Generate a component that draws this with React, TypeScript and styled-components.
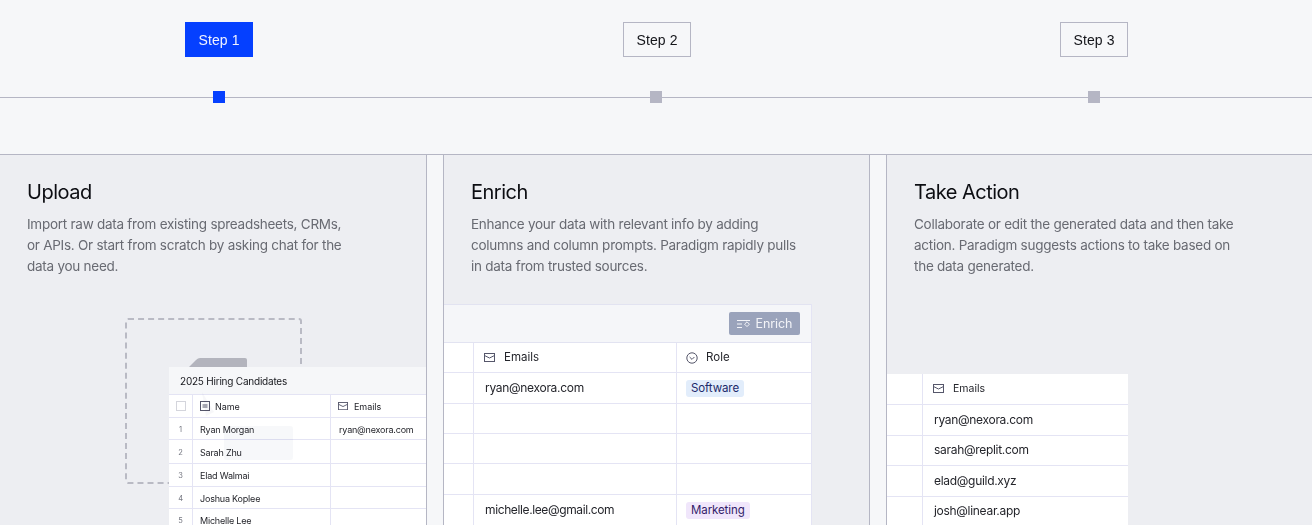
import React from "react";
import styled, { createGlobalStyle } from "styled-components";

const Global = createGlobalStyle`
  html, body { margin: 0; padding: 0; background: #f6f7f9; }
  body { width: 1312px; height: 525px; overflow: hidden; font-family: Inter, "Liberation Sans", sans-serif; }
`;

const Page = styled.div`
  width: 1312px;
  height: 525px;
  overflow: hidden;
  background: #f6f7f9;
`;

const Timeline = styled.div`
  position: relative;
  display: grid;
  grid-template-columns: 438px 438px 436px;
  height: 155px;
  box-sizing: border-box;
  border-bottom: 1px solid #b5b6c4;
  &::before {
    content: "";
    position: absolute;
    left: 0;
    right: 0;
    top: 97px;
    height: 1px;
    background: #b5b6c4;
  }
`;

const StepCol = styled.div`
  display: flex;
  flex-direction: column;
  align-items: center;
  padding-top: 22px;
  gap: 34px;
  position: relative;
`;

const StepBadge = styled.div<{ $active?: boolean }>`
  width: 68px;
  height: 35px;
  box-sizing: border-box;
  display: flex;
  align-items: center;
  justify-content: center;
  font: 14px/1 "Liberation Sans", Arial, sans-serif;
  letter-spacing: 0.1px;
  background: ${(p) => (p.$active ? "#0540ff" : "transparent")};
  border: 1px solid ${(p) => (p.$active ? "#0540ff" : "#b5b6c4")};
  color: ${(p) => (p.$active ? "#f0f2ff" : "#14151a")};
`;

const Dot = styled.div<{ $active?: boolean; $nudge?: boolean }>`
  width: 12px;
  height: 12px;
  margin-right: ${(p) => (p.$nudge ? "2px" : "0")};
  background: ${(p) => (p.$active ? "#0540ff" : "#b5b6c4")};
`;

const Panels = styled.div`
  display: grid;
  grid-template-columns: 427px 427px 426px;
  column-gap: 16px;
  height: 370px;
`;

const Panel = styled.section<{ $first?: boolean; $last?: boolean }>`
  position: relative;
  overflow: hidden;
  box-sizing: border-box;
  background: #edeef2;
  padding-top: 24px;
  padding-left: 27px;
  border-left: ${(p) => (p.$first ? "none" : "1px solid #b5b6c4")};
  border-right: ${(p) => (p.$last ? "none" : "1px solid #b5b6c4")};
`;

const Title = styled.h2`
  margin: 0;
  font: 400 20px/26px Inter, sans-serif;
  letter-spacing: -0.5px;
  color: #0c0d12;
`;

const Desc = styled.p`
  margin: 9px 0 0;
  font: 400 13.5px/21px Inter, sans-serif;
  letter-spacing: -0.26px;
  color: #686a72;
  white-space: pre-line;
`;

const Illustration = styled.div`
  position: absolute;
  left: 0;
  top: 0;
  width: 100%;
  height: 100%;
`;

const DropZone = styled.div`
  position: absolute;
  left: 125px;
  top: 163px;
  width: 177px;
  height: 166px;
  box-sizing: border-box;
  border: 2px dashed #b9bac4;
  border-radius: 3px;
`;

const FolderTab = styled.svg`
  position: absolute;
  left: 188px;
  top: 203px;
`;

const Table = styled.div<{ $left: number; $top: number; $w: number }>`
  position: absolute;
  left: ${(p) => p.$left}px;
  top: ${(p) => p.$top}px;
  width: ${(p) => p.$w}px;
  background: #fff;
  box-sizing: border-box;
`;

const NameBar = styled.div`
  height: 28px;
  box-sizing: border-box;
  background: #f6f7f9;
  border-bottom: 1px solid #e4e4f4;
  padding-left: 11px;
  font: 400 10px/28px Inter, sans-serif;
  letter-spacing: -0.22px;
  color: #16171c;
`;

const ToolBar = styled.div`
  height: 39px;
  box-sizing: border-box;
  background: #f5f6f9;
  border: 1px solid #e2e3f1;
  border-left: none;
  display: flex;
  justify-content: flex-end;
  align-items: center;
  padding-right: 11px;
`;

const EnrichButton = styled.div`
  width: 71px;
  height: 23px;
  background: #9aa3bb;
  border-radius: 2px;
  display: flex;
  align-items: center;
  justify-content: center;
  gap: 5px;
  color: #f3f4f8;
  font: 400 12.5px/1 Inter, sans-serif;
  letter-spacing: -0.1px;
  padding-top: 1px;
  box-sizing: border-box;
`;

const Row = styled.div<{ $cols: string; $h: number; $fs: number; $ls?: number; $drop?: number }>`
  display: grid;
  grid-template-columns: ${(p) => p.$cols};
  height: ${(p) => p.$h}px;
  box-sizing: border-box;
  border-bottom: 1px solid #e4e4f4;
  font: 400 ${(p) => p.$fs}px/1 Inter, sans-serif;
  letter-spacing: ${(p) => p.$ls ?? 0}px;
  color: #24252b;
  & > div {
    padding-top: ${(p) => p.$drop ?? 0}px;
  }
`;

const Cell = styled.div<{ $pad?: number; $gap?: number; $center?: boolean }>`
  display: flex;
  align-items: center;
  justify-content: ${(p) => (p.$center ? "center" : "flex-start")};
  gap: ${(p) => p.$gap ?? 0}px;
  padding-left: ${(p) => p.$pad ?? 0}px;
  box-sizing: border-box;
  border-right: 1px solid #e4e4f4;
  white-space: nowrap;
  overflow: hidden;
  &:last-child { border-right: none; }
`;

const Num = styled.span`
  font-size: 7.5px;
  color: #777983;
`;

const Check = styled.span`
  width: 8px;
  height: 8px;
  border: 1px solid #d4d5dc;
`;

const Tag = styled.span<{ $bg: string; $fg: string }>`
  padding: 2px 5px;
  background: ${(p) => p.$bg};
  color: ${(p) => p.$fg};
  border-radius: 3px;
  font-size: 11.5px;
  line-height: 13px;
  letter-spacing: -0.1px;
`;

const Ghost = styled.div`
  position: absolute;
  left: 224px;
  top: 271px;
  width: 69px;
  height: 34px;
  border-radius: 3px;
  background: rgba(237, 238, 242, 0.42);
  mix-blend-mode: multiply;
`;

const GhostArrow = styled.svg`
  position: absolute;
  left: 200px;
  top: 235px;
  mix-blend-mode: multiply;
`;

const RightEdge = styled.div<{ $left: number; $top: number }>`
  position: absolute;
  left: ${(p) => p.$left}px;
  top: ${(p) => p.$top}px;
  bottom: 0;
  width: 1px;
  background: #e4e4f4;
`;

const Mail = ({ s = 11 }: { s?: number }) => (
  <svg width={s} height={s * 0.82} viewBox="0 0 11 9" fill="none" stroke="#55566a" strokeWidth="1">
    <rect x="0.5" y="0.5" width="10" height="8" />
    <path d="M0.5 2.5l5 2.5 5-2.5" />
  </svg>
);

const NameIcon = () => (
  <svg width="10" height="10" viewBox="0 0 10 10" fill="none" stroke="#55566a" strokeWidth="1">
    <rect x="0.5" y="0.5" width="9" height="9" />
    <path d="M2.5 4h5M2.5 6h5" />
  </svg>
);

const RoleIcon = () => (
  <svg width="12" height="12" viewBox="0 0 12 12" fill="none" stroke="#55566a" strokeWidth="1">
    <circle cx="6" cy="6" r="5.2" />
    <path d="M3.6 5l2.4 2.4L8.4 5" />
  </svg>
);

const EnrichIcon = () => (
  <svg width="14" height="10" viewBox="0 0 14 10" fill="none" stroke="#f3f4f8" strokeWidth="1">
    <path d="M0 1.5h13M0 5h5M0 8.5h5" />
    <path d="M10 2.8l2.4 2.4L10 7.6 7.6 5.2z" />
  </svg>
);

const P1 = "24px 138px 95px";
const P2 = "30px 203px 135px";
const P3 = "36px 205px";

const people = ["Ryan Morgan", "Sarah Zhu", "Elad Walmai", "Joshua Koplee", "Michelle Lee"];
const heights = [22, 23.5, 23.5, 22, 22];

export default function App() {
  return (
    <Page>
      <Global />
      <Timeline>
        <StepCol>
          <StepBadge $active>Step 1</StepBadge>
          <Dot $active />
        </StepCol>
        <StepCol>
          <StepBadge>Step 2</StepBadge>
          <Dot $nudge />
        </StepCol>
        <StepCol>
          <StepBadge>Step 3</StepBadge>
          <Dot />
        </StepCol>
      </Timeline>
      <Panels>
        <Panel $first>
          <Title>Upload</Title>
          <Desc>{"Import raw data from existing spreadsheets, CRMs,\nor APIs. Or start from scratch by asking chat for the\ndata you need."}</Desc>
          <Illustration>
            <DropZone />
            <FolderTab width="60" height="10" viewBox="0 0 60 10">
              <path d="M0 10L8 2Q10 0 12 0H57Q59 0 59 2V10Z" fill="#b3b4bd" />
            </FolderTab>
            <Table $left={169} $top={212} $w={257}>
              <NameBar>2025 Hiring Candidates</NameBar>
              <Row $cols={P1} $h={23} $fs={9} $ls={-0.05}>
                <Cell $center><Check /></Cell>
                <Cell $pad={7} $gap={5}><NameIcon />Name</Cell>
                <Cell $pad={7} $gap={6}><Mail s={10} />Emails</Cell>
              </Row>
              {people.map((n, i) => (
                <Row key={n} $cols={P1} $h={heights[i]} $fs={9} $ls={-0.2} $drop={2}>
                  <Cell $center><Num>{i + 1}</Num></Cell>
                  <Cell $pad={7}>{n}</Cell>
                  <Cell $pad={8}>{i === 0 ? "ryan@nexora.com" : ""}</Cell>
                </Row>
              ))}
            </Table>
            <GhostArrow width="16" height="28" viewBox="0 0 16 28">
              <path d="M2 2L14 22L6 26Z" fill="rgba(237,238,242,0.45)" />
            </GhostArrow>
            <Ghost />
          </Illustration>
        </Panel>
        <Panel>
          <Title>Enrich</Title>
          <Desc>{"Enhance your data with relevant info by adding\ncolumns and column prompts. Paradigm rapidly pulls\nin data from trusted sources."}</Desc>
          <Illustration>
            <Table $left={0} $top={149} $w={368}>
              <ToolBar>
                <EnrichButton><EnrichIcon />Enrich</EnrichButton>
              </ToolBar>
              <Row $cols={P2} $h={30} $fs={11.5}>
                <Cell />
                <Cell $pad={10} $gap={9}><Mail />Emails</Cell>
                <Cell $pad={9} $gap={8}><RoleIcon />Role</Cell>
              </Row>
              <Row $cols={P2} $h={31} $fs={12} $ls={-0.3}>
                <Cell />
                <Cell $pad={11}>ryan@nexora.com</Cell>
                <Cell $pad={9}><Tag $bg="#e2edfb" $fg="#1c2a6a">Software</Tag></Cell>
              </Row>
              <Row $cols={P2} $h={30} $fs={12}><Cell /><Cell /><Cell /></Row>
              <Row $cols={P2} $h={30} $fs={12}><Cell /><Cell /><Cell /></Row>
              <Row $cols={P2} $h={31} $fs={12}><Cell /><Cell /><Cell /></Row>
              <Row $cols={P2} $h={31} $fs={12} $ls={-0.38}>
                <Cell />
                <Cell $pad={11}>michelle.lee@gmail.com</Cell>
                <Cell $pad={9}><Tag $bg="#f0e6fb" $fg="#331c6a">Marketing</Tag></Cell>
              </Row>
            </Table>
            <RightEdge $left={367} $top={149} />
          </Illustration>
        </Panel>
        <Panel $last>
          <Title>Take Action</Title>
          <Desc>{"Collaborate or edit the generated data and then take\naction. Paradigm suggests actions to take based on\nthe data generated."}</Desc>
          <Illustration>
            <Table $left={0} $top={219} $w={241}>
              <Row $cols={P3} $h={31} $fs={10.5}>
                <Cell />
                <Cell $pad={10} $gap={9}><Mail />Emails</Cell>
              </Row>
              {["ryan@nexora.com", "sarah@replit.com", "elad@guild.xyz", "josh@linear.app"].map((m) => (
                <Row key={m} $cols={P3} $h={30.5} $fs={12} $ls={-0.3}>
                  <Cell />
                  <Cell $pad={11}>{m}</Cell>
                </Row>
              ))}
            </Table>
          </Illustration>
        </Panel>
      </Panels>
    </Page>
  );
}
